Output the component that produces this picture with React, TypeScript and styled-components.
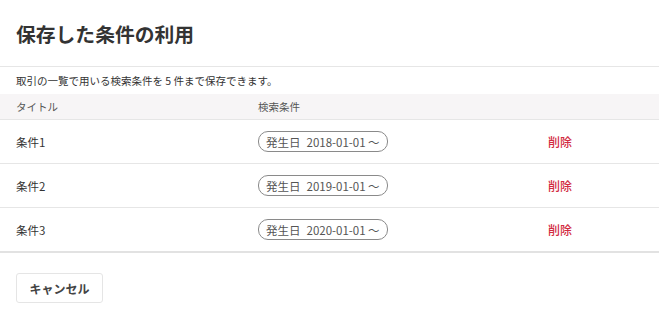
import styled, { createGlobalStyle } from "styled-components";

const GlobalStyle = createGlobalStyle`
  body {
    margin: 0;
    background: #fff;
    font-family: "Noto Sans CJK JP", "Noto Sans", sans-serif;
    color: #333;
  }
`;

const Page = styled.div`
  width: 659px;
  display: flex;
  flex-direction: column;
`;

const Header = styled.header`
  height: 66px;
  display: flex;
  align-items: center;
  padding-left: 16px;
  border-bottom: 1px solid #e6e6e6;
`;

const Title = styled.h1`
  margin: 0;
  font-size: 19.8px;
  font-weight: 700;
  color: #333;
`;

const Description = styled.p`
  margin: 0;
  height: 27px;
  display: flex;
  align-items: center;
  padding-left: 16px;
  font-size: 10.5px;
  color: #333;
`;

const Table = styled.div`
  display: flex;
  flex-direction: column;
  border-bottom: 2px solid #e2e2e2;
`;

const Row = styled.div<{ $head?: boolean }>`
  display: grid;
  grid-template-columns: 242px 290px 1fr;
  align-items: center;
  padding-left: 16px;
  height: ${(p) => (p.$head ? "25px" : "43px")};
  background: ${(p) => (p.$head ? "#f7f5f6" : "#fff")};
  border-bottom: 1px solid #e6e6e6;
  font-size: ${(p) => (p.$head ? "10.5px" : "11.5px")};
  color: ${(p) => (p.$head ? "#555" : "#333")};
  &:last-child {
    border-bottom: none;
  }
`;

const Pill = styled.span`
  justify-self: start;
  display: inline-flex;
  align-items: center;
  gap: 6px;
  height: 19px;
  padding: 0 7px;
  border: 1px solid #8a8a8a;
  border-radius: 10px;
  font-size: 11.5px;
  color: #555;
`;

const Delete = styled.button`
  justify-self: start;
  background: none;
  border: none;
  padding: 0;
  font-family: inherit;
  font-size: 12px;
  font-weight: 500;
  color: #d22b3f;
  cursor: pointer;
`;

const Footer = styled.div`
  padding: 20px 16px 0;
`;

const CancelButton = styled.button`
  width: 87px;
  height: 30px;
  background: #fff;
  border: 1px solid #e5e5e5;
  border-radius: 3px;
  font-family: inherit;
  font-size: 12px;
  font-weight: 700;
  color: #444;
  cursor: pointer;
`;

const conditions = [
  { title: "条件1", from: "2018-01-01" },
  { title: "条件2", from: "2019-01-01" },
  { title: "条件3", from: "2020-01-01" },
];

const App = () => (
  <Page>
    <GlobalStyle />
    <Header>
      <Title>保存した条件の利用</Title>
    </Header>
    <Description>取引の一覧で用いる検索条件を 5 件まで保存できます。</Description>
    <Table>
      <Row $head>
        <span>タイトル</span>
        <span>検索条件</span>
        <span />
      </Row>
      {conditions.map((c) => (
        <Row key={c.title}>
          <span>{c.title}</span>
          <Pill>
            <span>発生日</span>
            <span>{c.from} ～</span>
          </Pill>
          <Delete>削除</Delete>
        </Row>
      ))}
    </Table>
    <Footer>
      <CancelButton>キャンセル</CancelButton>
    </Footer>
  </Page>
);

export default App;
